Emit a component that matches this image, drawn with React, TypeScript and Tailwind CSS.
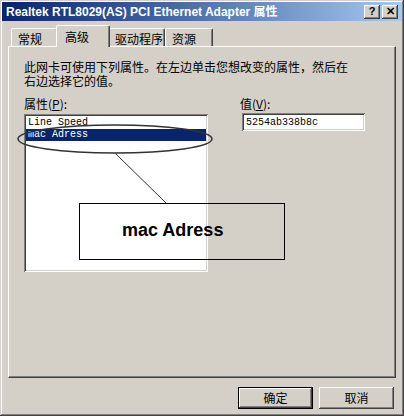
import React from "react";

const cjk = "font-['SimSun','Noto_Sans_CJK_SC',sans-serif]";
const mono = "font-['Liberation_Mono','Noto_Sans_CJK_SC',monospace]";

// Win2k style 3D edges
const raised = "shadow-[inset_-1px_-1px_#404040,inset_1px_1px_#ffffff,inset_-2px_-2px_#808080,inset_2px_2px_#d4d0c8]";
const sunken = "shadow-[inset_1px_1px_#808080,inset_-1px_-1px_#ffffff,inset_2px_2px_#404040,inset_-2px_-2px_#d4d0c8]";

const tabs = [
  { label: "常规", w: "w-[47px]" },
  { label: "高级", w: "w-[50px]", active: true },
  { label: "驱动程序", w: "w-[57px]" },
  { label: "资源", w: "w-[48px]" },
];

function TitleButton({ children }: { children: React.ReactNode }) {
  return (
    <div
      className={`w-[16px] h-[14px] bg-[#d4d0c8] ${raised} flex items-center justify-center text-[11px] font-bold text-black leading-none font-['Liberation_Sans',sans-serif]`}
    >
      {children}
    </div>
  );
}

function Button({ label, isDefault }: { label: string; isDefault?: boolean }) {
  return (
    <button
      className={`w-[75px] h-[22px] bg-[#d4d0c8] flex items-center justify-center text-[12px] text-black ${cjk} ${
        isDefault
          ? "shadow-[inset_0_0_0_1px_#000000,inset_-2px_-2px_#404040,inset_2px_2px_#ffffff,inset_-3px_-3px_#808080]"
          : raised
      }`}
    >
      {label}
    </button>
  );
}

export default function App() {
  return (
    <div className="relative w-[404px] h-[416px] bg-[#d4d0c8] p-[2px] shadow-[inset_-1px_-1px_#404040,inset_1px_1px_#d4d0c8,inset_-2px_-2px_#808080,inset_2px_2px_#ffffff] overflow-hidden">
      {/* Title bar */}
      <div className="h-[19px] flex items-center justify-between pl-[4px] pr-[4px] bg-gradient-to-r from-[#0a246a] to-[#a6caf0]">
        <span className="text-white text-[12px] font-bold font-['Liberation_Sans','Noto_Sans_CJK_SC',sans-serif] whitespace-nowrap">
          Realtek RTL8029(AS) PCI Ethernet Adapter 属性
        </span>
        <div className="flex gap-[2px]">
          <TitleButton>?</TitleButton>
          <TitleButton>✕</TitleButton>
        </div>
      </div>

      {/* Tabs */}
      <div className="mt-[4px] ml-[9px] flex items-end h-[21px]">
        {tabs.map((t) =>
          t.active ? (
            <div
              key={t.label}
              className={`relative z-10 -mx-[2px] h-[22px] w-[54px] -mb-[1px] bg-[#d4d0c8] border-t border-l border-white border-r border-r-[#404040] shadow-[inset_-1px_0_#808080] rounded-t-[2px] flex items-start pt-[2px] pl-[8px] text-[12px] text-black ${cjk}`}
            >
              {t.label}
            </div>
          ) : (
            <div
              key={t.label}
              className={`h-[18px] ${t.w} bg-[#d4d0c8] border-t border-l border-white border-r border-r-[#404040] shadow-[inset_-1px_0_#808080] rounded-t-[2px] flex items-start pt-[1px] pl-[6px] text-[12px] text-black ${cjk}`}
            >
              {t.label}
            </div>
          )
        )}
      </div>

      {/* Tab panel */}
      <div className="ml-[6px] w-[388px] h-[332px] border-t border-l border-white border-r border-b border-r-[#404040] border-b-[#404040] shadow-[inset_-1px_-1px_#808080] pt-[13px] pl-[15px]">
        <p className={`text-[12px] leading-[14px] text-black ${cjk}`}>
          此网卡可使用下列属性。在左边单击您想改变的属性，然后在
          <br />
          右边选择它的值。
        </p>

        <div className="mt-[9px] flex">
          <div className="w-[184px]">
            <div className={`text-[12px] leading-[14px] text-black ${cjk}`}>属性(<span className="underline">P</span>):</div>
            <div className={`mt-[3px] h-[158px] bg-white ${sunken} p-[2px] text-[10px] leading-[13px] ${mono}`}>
              <div className="h-[13px] px-[2px] text-black">Line Speed</div>
              <div className="h-[12px] px-[2px] bg-[#0a246a] text-white leading-[12px]">mac Adress</div>
            </div>
          </div>

          <div className="ml-[32px]">
            <div className={`text-[12px] leading-[14px] text-black ${cjk}`}>值(<span className="underline">V</span>):</div>
            <div className={`mt-[2px] ml-[2px] w-[123px] h-[18px] bg-white ${sunken} flex items-center pl-[4px] text-[10px] text-black ${mono}`}>
              5254ab338b8c
            </div>
          </div>
        </div>
      </div>

      {/* Buttons */}
      <div className="mt-[9px] mr-[8px] flex justify-end gap-[6px]">
        <Button label="确定" isDefault />
        <Button label="取消" />
      </div>

      {/* Annotation overlay */}
      <svg className="absolute inset-0 pointer-events-none" width="404" height="416">
        <ellipse cx="115" cy="139" rx="97" ry="14" fill="none" stroke="#333333" strokeWidth="1.5" />
        <line x1="115" y1="153" x2="166" y2="203" stroke="#333333" strokeWidth="1" />
        <rect x="79.5" y="203.5" width="205" height="56" fill="none" stroke="#000000" strokeWidth="1" />
      </svg>
      <div className="absolute left-[122px] top-[221px] text-[18px] leading-[18px] font-bold text-black font-['Liberation_Sans',sans-serif] pointer-events-none">
        mac Adress
      </div>
    </div>
  );
}
